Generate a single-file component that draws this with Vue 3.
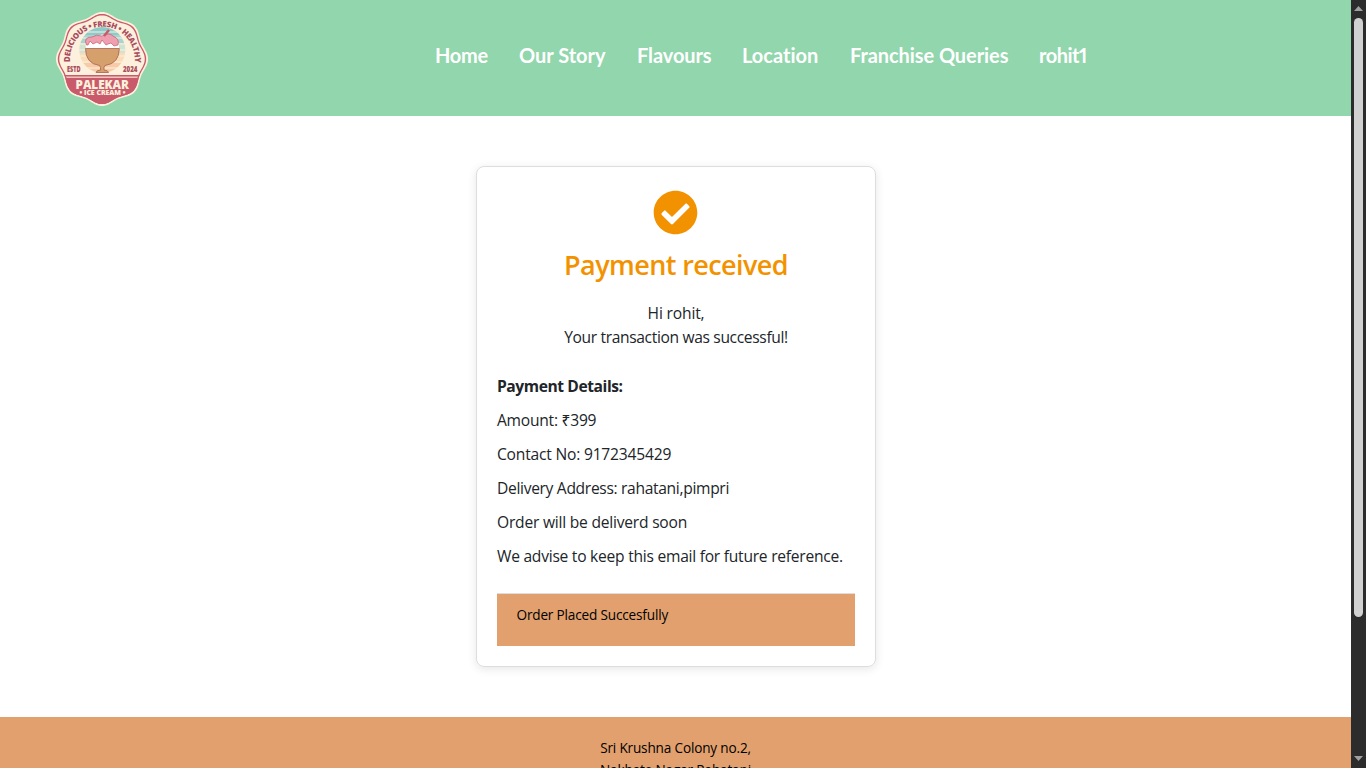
<script setup>
const nav = [
  { label: 'Home', cls: 'n-home' },
  { label: 'Our Story', cls: 'n-story' },
  { label: 'Flavours', cls: 'n-flav' },
  { label: 'Location', cls: 'n-loc' },
  { label: 'Franchise Queries', cls: 'n-fran' },
  { label: 'rohit1', cls: 'n-user' },
]

// Scalloped badge outline with eight lobes
function badge(r, amp) {
  let d = ''
  for (let i = 0; i < 160; i++) {
    const a = (i / 160) * Math.PI * 2
    const rr = r + amp * Math.cos(8 * a)
    d += (i ? 'L' : 'M') + (50 + rr * Math.sin(a) * 0.98).toFixed(2) + ' ' + (50 - rr * Math.cos(a)).toFixed(2)
  }
  return d + 'Z'
}
const outer = badge(45.2, 1.8)
const ring = badge(43.4, 1.7)
const inner = badge(42, 1.6)
</script>

<template>
  <div class="page">
    <div class="content">
      <header class="bar">
        <svg class="logo" viewBox="0 0 100 100">
          <defs>
            <clipPath id="badge-clip"><path :d="ring" /></clipPath>
            <clipPath id="sun-clip"><circle cx="50.300" cy="41" r="23" /></clipPath>
            <path id="arc" d="M18 53 V50 A32.300 32.300 0 0 1 82.600 50 V56" />
          </defs>
          <path :d="outer" fill="#fdf0dc" />
          <path :d="ring" fill="#c95a6b" />
          <path :d="inner" fill="#fdf0dc" />
          <g clip-path="url(#sun-clip)">
            <rect x="25" y="16" width="50" height="10" fill="#8ccbc9" />
            <rect x="25" y="26" width="50" height="8" fill="#a6d6cf" />
            <rect x="25" y="34" width="50" height="10" fill="#cfe3d0" />
            <rect x="25" y="44" width="50" height="10" fill="#fbdcb8" />
            <rect x="25" y="54" width="50" height="12" fill="#f8cba8" />
            <path d="M25 23H75M25 29H75M25 35H75M25 41H75M25 47H75M25 53H75M25 59H75" stroke="#fdf0dc" stroke-width="1" />
          </g>
          <path d="M34 40Q32 27 42 28Q51 23 59 28Q68 29 67 40Z" fill="#fff" />
          <path d="M34.500 36Q31 28 40 28Q44 25 50 27Q57 23 61 27Q68 30 66 36L62 37L59 34L56 35L54 36L50 31L48 35L45 33L41 35L38 32L36 36Z" fill="#ee9fb0" stroke="#c95a6b" stroke-width=".7" />
          <path d="M52 27L57 21" stroke="#c95a6b" stroke-width="2.500" />
          <path d="M33.500 39.500H67.300Q67.300 54.500 53 56.500Q51.500 58 52 61Q56.500 61.500 56.500 63.500H44Q44 61.500 48.500 61Q49 58 47.500 56.500Q33.500 54.500 33.500 39.500Z" fill="#d6a06d" stroke="#a96250" stroke-width=".8" />
          <g clip-path="url(#badge-clip)">
            <rect x="0" y="68.700" width="100" height="32" fill="#c95a6b" />
            <rect x="0" y="66" width="100" height="1.600" fill="#c95a6b" />
          </g>
          <g class="badge-text">
            <text font-size="7.800" fill="#a94d60"><textPath href="#arc" startOffset="0" textLength="108">DELICIOUS • FRESH • HEALTHY</textPath></text>
            <text x="15" y="62.600" font-size="7.800" textLength="13.500" lengthAdjust="spacingAndGlyphs" fill="#a94d60">ESTD</text>
            <text x="71" y="62.600" font-size="7.800" textLength="14.500" lengthAdjust="spacingAndGlyphs" fill="#a94d60">2024</text>
            <text x="23.500" y="79.700" font-size="11.500" textLength="53.500" lengthAdjust="spacingAndGlyphs" fill="#fdf0dc">PALEKAR</text>
            <text x="27.500" y="86" font-size="6" textLength="46" lengthAdjust="spacingAndGlyphs" fill="#fdf0dc">• ICE CREAM •</text>
          </g>
        </svg>
        <nav class="nav">
          <a v-for="n in nav" :key="n.label" :class="['link', n.cls]"><span>{{ n.label }}</span></a>
        </nav>
      </header>

      <main class="main">
        <section class="card">
          <svg class="check" viewBox="0 0 512 512">
            <path fill="#f39200" d="M504 256c0 136.967-111.033 248-248 248S8 392.967 8 256 119.033 8 256 8s248 111.033 248 248zM227.314 387.314l184-184c6.248-6.248 6.248-16.379 0-22.627l-22.627-22.627c-6.248-6.249-16.379-6.249-22.628 0L216 308.118l-70.059-70.059c-6.248-6.248-16.379-6.248-22.628 0l-22.627 22.627c-6.248 6.248-6.248 16.379 0 22.627l104 104c6.249 6.249 16.379 6.249 22.628.001z" />
          </svg>
          <h1 class="title"><span>Payment received</span></h1>
          <p class="greet"><span class="g1">Hi rohit,</span><br><span class="g2">Your transaction was successful!</span></p>
          <div class="details">
            <p><b class="d0">Payment Details:</b></p>
            <p><span class="d1">Amount: ₹399</span></p>
            <p><span class="d2">Contact No: 9172345429</span></p>
            <p><span class="d3">Delivery Address: rahatani,pimpri</span></p>
            <p><span class="d4">Order will be deliverd soon</span></p>
            <p><span class="d5">We advise to keep this email for future reference.</span></p>
          </div>
          <div class="notice"><span>Order Placed Succesfully</span></div>
        </section>
      </main>

      <footer class="foot">
        <div><span class="f1">Sri Krushna Colony no.2,</span></div>
        <div><span class="f2">Nakhate Nagar,Rahatani</span></div>
      </footer>
    </div>
    <div class="scroll">
      <svg viewBox="0 0 15 18" class="arrow"><path d="M3 11L7.500 6L12 11Z" fill="#a0a0a0" /></svg>
      <div class="thumb"></div>
      <svg viewBox="0 0 15 18" class="arrow down"><path d="M3 6L7.500 11L12 6Z" fill="#a0a0a0" /></svg>
    </div>
  </div>
</template>

<style>
body { margin: 0; overflow: hidden; }
</style>

<style scoped>
.page { display: flex; width: 1366px; height: 768px; overflow: hidden; background: #fff; color: #212529; font: 15.6px/24px "Open Sans", "Noto Sans", sans-serif; }
.content { width: 1351px; height: 768px; overflow: hidden; display: flex; flex-direction: column; }
.bar { box-sizing: border-box; height: 116px; flex: none; background: #91d6ac; display: flex; padding-left: 52px; }
.logo { width: 100px; height: 100px; margin-top: 9px; }
.badge-text { font-family: "Open Sans", sans-serif; font-weight: 800; }
.nav { display: flex; margin-left: 283px; padding-top: 40px; }
.link { color: #fff; font: 700 20px/30px Lato, sans-serif; white-space: nowrap; font-variant-ligatures: none; }
.n-home { width: 84px; letter-spacing: -.3px; }
.n-story { width: 118px; }
.n-flav { width: 105px; letter-spacing: -.1px; }
.n-loc { width: 108px; }
.n-fran { width: 189px; letter-spacing: -.07px; }
.n-user { letter-spacing: -.5px; font-variant-numeric: proportional-nums; }
.main { flex: none; height: 601px; box-sizing: border-box; padding: 50px 0 0 476px; }
.card { box-sizing: border-box; width: 400px; height: 501px; border: 1px solid #ddd; border-radius: 8px; box-shadow: 0 2px 10px rgba(0,0,0,.1); padding: 23px 20px 20px; text-align: center; white-space: nowrap; }
.check { display: block; width: 45px; height: 45px; margin: 0 0 0 156px; }
.title { margin: 13px 0 0; color: #f39200; font-size: 27px; line-height: 34px; font-weight: 600; letter-spacing: -.6px; }
.greet { margin: 19px 0 0; }
.g1 { letter-spacing: -.17px; }
.g2 { letter-spacing: -.35px; }
.details { margin-top: 25px; text-align: left; }
.details p { margin: 0 0 10px; }
.d0 { letter-spacing: -.42px; }
.d1 { letter-spacing: -.24px; }
.d2 { letter-spacing: -.2px; }
.d3 { letter-spacing: -.32px; }
.d4 { letter-spacing: -.22px; }
.d5 { letter-spacing: -.25px; }
.notice { box-sizing: border-box; margin-top: 25px; height: 53px; border-top: 1px solid #ddd; background: #e2a06e; padding: 9px 19.5px; text-align: left; color: #000; font-size: 13.6px; line-height: 24px; letter-spacing: -.18px; }
.foot { flex: 1; background: #e2a06e; color: #000; text-align: center; padding-top: 20px; font-size: 13.6px; line-height: 22px; letter-spacing: -.17px; }
.scroll { width: 15px; height: 768px; background: #2c2c2c; display: flex; flex-direction: column; align-items: center; }
.arrow { width: 15px; height: 18px; flex: none; }
.thumb { width: 9px; height: 599px; border-radius: 5px; background: #d1d1d1; }
.down { margin-top: auto; }
</style>
